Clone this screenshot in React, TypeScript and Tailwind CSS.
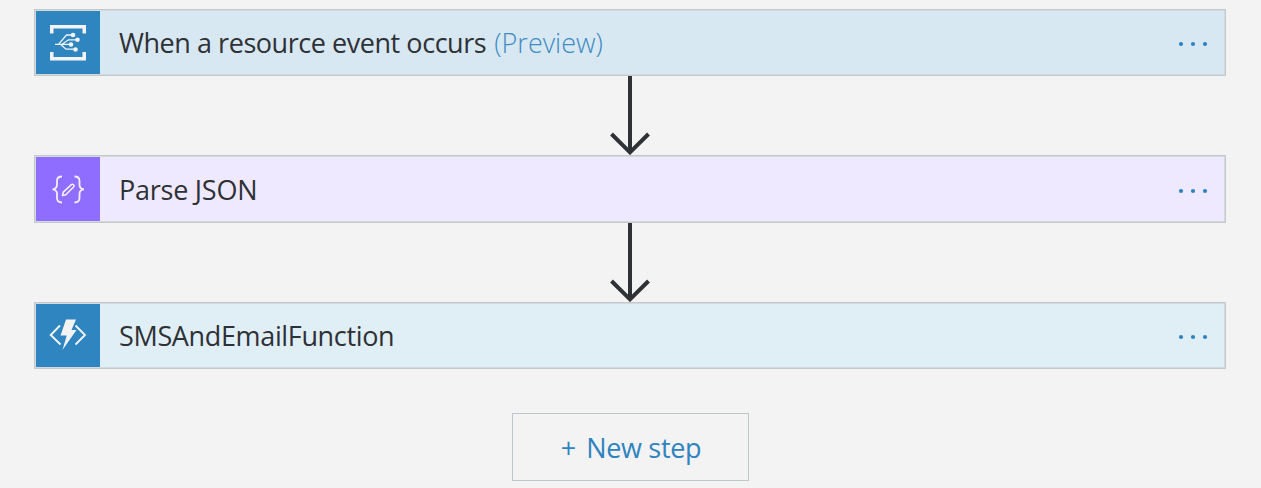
import type { ReactNode } from 'react';

function EventGridIcon() {
  return (
    <svg className="shrink-0" width="64" height="63" viewBox="0 0 64 63" fill="none">
      <path d="M14 22.500V14h36v8.500h-3.500V17.500h-29v5zM14 41h3.500v5h29v-5H50v8.500H14z" fill="#f3f3f3" />
      <path d="M19 33.300h17M22.500 33.300 30.500 24h6.500M26 33.300 32.500 28.800h9M24.500 33.300 30 38.200h9" stroke="#f3f3f3" strokeWidth="1.300" />
      <g fill="#f3f3f3">
        <circle cx="37" cy="24" r="2.300" />
        <circle cx="41.500" cy="28.800" r="2.300" />
        <circle cx="35" cy="33.500" r="2.300" />
        <circle cx="39.500" cy="38.500" r="2.300" />
      </g>
    </svg>
  );
}

function JsonIcon() {
  return (
    <svg className="shrink-0" width="64" height="64" viewBox="0 0 64 64" fill="none" stroke="#f3efff">
      <path d="M26 19.500c-3.500 0-5 1.300-5 4.500v3.500c0 3-1.300 4.500-4.500 4.800 3.200.3 4.500 1.700 4.500 4.700v4c0 3.200 1.500 4.500 5 4.500M38.500 19.500c3.500 0 5 1.300 5 4.500v3.500c0 3 1.300 4.500 4.500 4.800-3.200.3-4.500 1.700-4.500 4.700v4c0 3.200-1.500 4.500-5 4.500" strokeWidth="1.800" />
      <path d="m26.500 38.500.8-3.300 8-7.500c1.500-1.300 3.700.7 2.300 2.300l-7.800 7.700z" strokeWidth="1.600" strokeLinejoin="round" />
    </svg>
  );
}

function FunctionIcon() {
  return (
    <svg className="shrink-0" width="64" height="63" viewBox="0 0 64 63" fill="none">
      <path d="m24 21.500-9.300 9.500 9.800 9.500M39.500 21.500l9.500 9.500-9.500 9.500" stroke="#f3f3f3" strokeWidth="1.900" />
      <path d="M30 15.500h10l-4.500 10.500h5L26.500 46l4.200-14.500h-6.200z" fill="#f3f3f3" />
    </svg>
  );
}

function Arrow() {
  return (
    <svg className="mx-auto block shrink-0" width="42" height="79" viewBox="0 0 42 79" fill="none" stroke="#2e3135" strokeWidth="4">
      <path d="M21 0v76M2.500 58 21 76.300 39.500 58" />
    </svg>
  );
}

interface StepProps {
  icon: ReactNode;
  iconClass: string;
  cardClass: string;
  children: ReactNode;
}

function Step({ icon, iconClass, cardClass, children }: StepProps) {
  return (
    <div className={`flex w-full shrink-0 items-stretch border border-[#c3c8ca] p-px inset-shadow-[0_0_0_1px_#d3dadf] ${cardClass}`}>
      <div className={`flex w-16 shrink-0 items-center justify-center overflow-hidden ${iconClass}`}>{icon}</div>
      <div className="flex flex-1 items-center pt-px pl-[19px] text-[27px] leading-9 whitespace-pre text-[#2e3135]">{children}</div>
      <button aria-label="More" className="flex w-[62px] items-center justify-center pt-[3px]">
        <svg width="32" height="8" viewBox="0 0 32 8" fill="#2f83bf">
          <circle cx="4" cy="4" r="2.100" />
          <circle cx="16" cy="4" r="2.100" />
          <circle cx="28" cy="4" r="2.100" />
        </svg>
      </button>
    </div>
  );
}

export default function App() {
  return (
    <main className="flex h-[488px] w-full flex-col overflow-hidden bg-[#f3f3f3] pt-[9px] pr-[35px] pl-[34px] font-['Open_Sans',sans-serif]">
      <Step icon={<EventGridIcon />} iconClass="bg-[#2f85c0]" cardClass="h-[67px] bg-[#d8e8f2]">
        <span className="tracking-[-0.45px]">When a resource event occurs</span>
        <span className="pl-2 font-light text-[#3f8cc2]">(Preview)</span>
      </Step>
      <Arrow />
      <Step icon={<JsonIcon />} iconClass="bg-[#8f6dff]" cardClass="h-[68px] bg-[#eee9fe]">
        <span className="tracking-[-0.25px]">Parse JSON</span>
      </Step>
      <Arrow />
      <Step icon={<FunctionIcon />} iconClass="bg-[#2f85c0]" cardClass="h-[67px] bg-[#e0eef6]">
        <span className="tracking-[-0.35px]">SMSAndEmailFunction</span>
      </Step>
      <button className="mx-auto mt-11 flex h-[68px] w-[237px] shrink-0 items-center justify-center border border-[#bfc6ca] pt-[3px] pl-0.5 text-[27px] whitespace-pre text-[#2f83bf]">
        <span>+</span>
        <span className="pl-2.5 tracking-[-0.3px]">New step</span>
      </button>
    </main>
  );
}
